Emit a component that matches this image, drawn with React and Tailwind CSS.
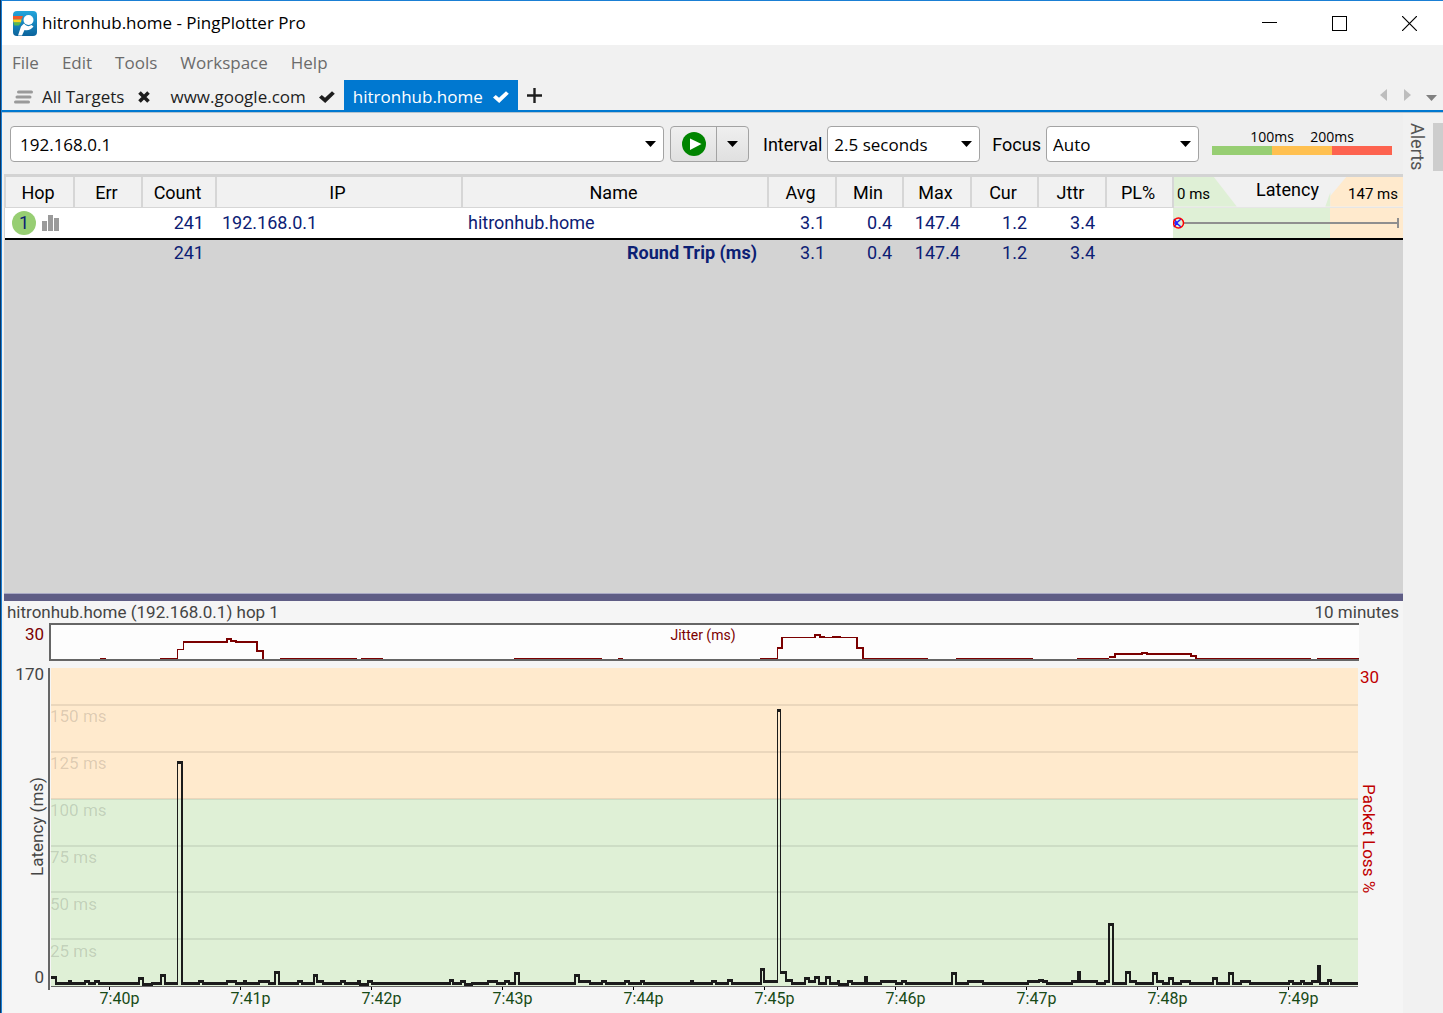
import { useState } from "react";

const MENUS = ["File", "Edit", "Tools", "Workspace", "Help"];

const COLUMNS = [
  { name: "Hop", width: "w-[69px] border-l-2" },
  { name: "Err", width: "w-[68px]" },
  { name: "Count", width: "w-[74px]" },
  { name: "IP", width: "w-[246px]" },
  { name: "Name", width: "" },
  { name: "Avg", width: "w-[68px]" },
  { name: "Min", width: "w-[67px]" },
  { name: "Max", width: "w-[68px]" },
  { name: "Cur", width: "w-[67px]" },
  { name: "Jttr", width: "w-[68px]" },
  { name: "PL%", width: "w-[67px]" },
];

const STATS = ["3.1", "0.4", "147.4", "1.2", "3.4"];

const TIMES = ["7:40p", "7:41p", "7:42p", "7:43p", "7:44p", "7:45p", "7:46p", "7:47p", "7:48p", "7:49p"];

// [start, end, height above the base line]; everything between is flat
const SAMPLES = [
  [0, 6, 6], [17, 21, 2], [33, 39, 2], [43, 49, 2], [87, 93, 5], [93, 100, -1], [109, 115, 8],
  [126, 132, 221], [147, 153, 2], [175, 186, 2], [192, 196, 2], [207, 219, 2], [223, 229, 11],
  [246, 252, 2], [262, 267, 8], [267, 273, 2], [289, 295, 2], [306, 310, 2], [310, 316, -1],
  [316, 322, 2], [398, 403, 3], [409, 415, 2], [415, 420, -1], [436, 447, 2], [453, 459, 2],
  [463, 469, 10], [523, 529, 8], [529, 540, 2], [550, 556, 2], [573, 579, 2], [589, 594, 2],
  [639, 643, 2], [660, 666, 2], [676, 682, 3], [709, 714, 14], [714, 726, 2], [726, 730, 273],
  [730, 736, 11], [736, 742, 3], [753, 759, 5], [759, 763, 2], [763, 769, 6], [774, 780, 6],
  [786, 789, 2], [789, 796, -1], [796, 802, 2], [813, 817, 6], [829, 846, 2], [850, 856, 2],
  [900, 906, 10], [916, 933, 2], [976, 987, 2], [987, 993, 3], [993, 997, 2], [1020, 1026, 2],
  [1026, 1030, 11], [1030, 1047, 2], [1053, 1057, 2], [1057, 1063, 59], [1074, 1080, 11],
  [1080, 1086, 2], [1101, 1107, 10], [1107, 1113, 2], [1117, 1123, 5], [1129, 1140, 2],
  [1161, 1167, 5], [1177, 1183, 10], [1189, 1200, 2], [1237, 1243, 2], [1249, 1254, 2],
  [1260, 1266, 2], [1266, 1270, 17], [1276, 1281, 3],
];

const GRID = [
  { label: "150 ms", y: 36 },
  { label: "125 ms", y: 83 },
  { label: "100 ms", y: 130 },
  { label: "75 ms", y: 177 },
  { label: "50 ms", y: 223 },
  { label: "25 ms", y: 270 },
];

function tracePath() {
  const base = 314;
  const steps = [];
  let x = 0;
  SAMPLES.forEach(([start, end, h]) => {
    if (start > x) steps.push([x, start, base]);
    steps.push([start, end, base - h]);
    x = end;
  });
  steps.push([x, 1307, base]);

  let d = "";
  steps.forEach(([from, to, y], i) => {
    d += `M${from} ${y}H${to}V${y + 3}H${from}Z`;
    const next = steps[i + 1];
    if (next) {
      const top = Math.min(y, next[2]);
      const bottom = Math.max(y, next[2]) + 3;
      const rising = next[2] < y;
      // narrow spikes keep thin sides so that they stay hollow
      const thin = Math.abs(next[2] - y) > 240 || (rising && y - next[2] > 100);
      const w = thin ? 1 : 2;
      const left = rising ? to : to - w;
      d += `M${left} ${top}h${w}V${bottom}h${-w}Z`;
    }
  });
  return d;
}

function Logo() {
  return (
    <svg width="24" height="25" viewBox="0 0 24 25" aria-hidden="true">
      <defs>
        <linearGradient id="logoBg" x1="0" y1="0" x2="0" y2="1">
          <stop offset="0" stopColor="#22a5dc" />
          <stop offset="1" stopColor="#0b639c" />
        </linearGradient>
      </defs>
      <rect x="0" y="0" width="24" height="25" rx="4" fill="url(#logoBg)" />
      <path d="M0 5H10L8.500 8.500H0Z" fill="#f0592a" />
      <path d="M0 8.500H8.500L8 11.500H0.500Z" fill="#fdd31d" />
      <path d="M0.500 11.500H8L6 14.500H1.500Z" fill="#5cb947" />
      <circle cx="15.500" cy="9" r="5" fill="#fff" />
      <path d="M11 12.500L8 15.500L5 24.500H9L11.500 19C15 19.800 18.500 18.500 20.500 15.500L18.500 14C16.500 15.500 14 15.500 12.500 14Z" fill="#fff" />
    </svg>
  );
}

function Check() {
  return (
    <svg width="16" height="12" viewBox="0 0 16 12" aria-hidden="true">
      <path d="M0 6.500L2.800 4L6 6.800L13 0.200L15.800 2.800L6.200 12Z" fill="currentColor" />
    </svg>
  );
}

function Caret() {
  return (
    <svg width="11" height="6" viewBox="0 0 11 6" aria-hidden="true">
      <path d="M0 0H11L5.500 6Z" fill="currentColor" />
    </svg>
  );
}

function TitleBar() {
  return (
    <header className="flex h-11 items-center justify-between bg-white pl-[11px] font-['Open_Sans',sans-serif] text-black">
      <div className="flex items-center gap-[5px]">
        <Logo />
        <h1 className="text-[17px]">hitronhub.home - PingPlotter Pro</h1>
      </div>
      <div className="flex h-full">
        <button aria-label="Minimize" className="flex w-[67px] items-center justify-center">
          <svg width="15" height="15" viewBox="0 0 15 15" shapeRendering="crispEdges"><path d="M0 6.500H15" stroke="#000" /></svg>
        </button>
        <button aria-label="Maximize" className="flex w-[72px] items-center justify-center">
          <svg width="15" height="15" viewBox="0 0 15 15" shapeRendering="crispEdges"><rect x="0.500" y="0.500" width="14" height="14" fill="none" stroke="#000" /></svg>
        </button>
        <button aria-label="Close" className="flex w-[68px] items-center justify-center">
          <svg width="15" height="15" viewBox="0 0 15 15"><path d="M0 0L15 15M15 0L0 15" stroke="#000" strokeWidth="1.200" /></svg>
        </button>
      </div>
    </header>
  );
}

function TabStrip() {
  return (
    <div className="flex h-[30px] items-stretch justify-between font-['Open_Sans',sans-serif] text-[17px] text-[#1e1e1e]">
      <div className="flex items-stretch">
        <button className="flex items-center pt-[3px] pl-3">
          <svg width="19" height="14" viewBox="0 0 19 14" className="mr-[9px]" aria-hidden="true">
            <path d="M4.500 2H17.500M3 7H16M1.500 12H14.500" stroke="#9a9a9a" strokeWidth="3" strokeLinecap="round" />
          </svg>
          All Targets
          <svg width="12" height="12" viewBox="0 0 12 12" className="ml-3.5" aria-hidden="true">
            <path d="M1.500 1.500L10.500 10.500M10.500 1.500L1.500 10.500" stroke="currentColor" strokeWidth="3.600" />
          </svg>
        </button>
        <button className="flex items-center gap-[13px] pt-[3px] pr-[9px] pl-5">www.google.com <Check /></button>
        <button className="flex items-center gap-2.5 bg-[#0078d0] px-[9px] pt-[3px] text-white">hitronhub.home <Check /></button>
        <button aria-label="New tab" className="px-[9px]">
          <svg width="15" height="15" viewBox="0 0 15 15"><path d="M7.500 0V15M0 7.500H15" stroke="#1e1e1e" strokeWidth="2.400" /></svg>
        </button>
      </div>
      <div className="flex items-center gap-[17px] pr-1.5">
        <button aria-label="Previous tab"><svg width="7" height="12" viewBox="0 0 7 12"><path d="M7 0V12L0 6Z" fill="#bdbdbd" /></svg></button>
        <button aria-label="Next tab"><svg width="7" height="12" viewBox="0 0 7 12"><path d="M0 0V12L7 6Z" fill="#bdbdbd" /></svg></button>
        <button aria-label="All tabs" className="-ml-0.5 pt-1.5 text-[#808080]"><Caret /></button>
      </div>
    </div>
  );
}

function Picker({ id, label, value, options, onChange }) {
  return (
    <div className="flex items-center gap-[5px]">
      <label htmlFor={id} className="pt-0.5">{label}</label>
      <div className="relative">
        <select
          id={id}
          value={value}
          onChange={(e) => onChange(e.target.value)}
          className="h-9 w-[153px] appearance-none rounded border border-[#a3a3a3] bg-white pt-0.5 pl-1.5 font-['Open_Sans',sans-serif] text-[17px]"
        >
          {options.map((o) => <option key={o}>{o}</option>)}
        </select>
        <span className="pointer-events-none absolute top-[15px] right-2"><Caret /></span>
      </div>
    </div>
  );
}

function Toolbar() {
  const [target, setTarget] = useState("192.168.0.1");
  const [interval, setIntervalValue] = useState("2.5 seconds");
  const [focus, setFocus] = useState("Auto");

  return (
    <div className="flex h-[61px] items-center bg-[#efefef] pr-[11px] pl-1.5 text-[18px] text-black">
      <div className="flex h-9 flex-1 items-center rounded border border-[#a3a3a3] bg-white pr-[7px] pl-[9px]">
        <input
          aria-label="Target"
          value={target}
          onChange={(e) => setTarget(e.target.value)}
          className="min-w-0 flex-1 pt-0.5 font-['Open_Sans',sans-serif] text-[17px] outline-none"
        />
        <button aria-label="Recent targets"><Caret /></button>
      </div>
      <div className="ml-1.5 flex h-9 w-[79px] rounded border border-[#a3a3a3] bg-linear-to-b from-[#efefef] to-[#e0e0e0]">
        <button aria-label="Start" className="flex w-[46px] items-center justify-center border-r border-[#a3a3a3]">
          <svg width="24" height="24" viewBox="0 0 24 24">
            <circle cx="12" cy="12" r="12" fill="#008400" />
            <path d="M8 6.500L19.500 12L8 18Z" fill="#fff" />
          </svg>
        </button>
        <button aria-label="Start options" className="flex flex-1 items-center justify-center"><Caret /></button>
      </div>
      <div className="ml-3.5 flex gap-3">
        <Picker id="interval" label="Interval" value={interval} onChange={setIntervalValue} options={["1 second", "2.5 seconds", "5 seconds"]} />
        <Picker id="focus" label="Focus" value={focus} onChange={setFocus} options={["Auto", "All", "10 minutes"]} />
      </div>
      <div className="ml-[13px] w-[180px] pb-1 font-['Open_Sans',sans-serif] text-[14px] leading-[18px]">
        <div className="flex justify-center">
          <span className="w-[60px] text-center">100ms</span>
          <span className="w-[60px] text-center">200ms</span>
        </div>
        <div className="grid h-[9px] grid-cols-3">
          <div className="bg-[#97ce73]" />
          <div className="bg-[#ffc050]" />
          <div className="bg-[#fd634f]" />
        </div>
      </div>
    </div>
  );
}

function HopTable() {
  return (
    <table className="w-full table-fixed border-collapse text-[18px] leading-6 text-[#0c2074]">
      <thead>
        <tr className="h-[30px] bg-[#f1f1f1] text-black">
          {COLUMNS.map((c) => (
            <th key={c.name} className={`border-r-2 border-b border-[#d6d6d6] pt-0.5 pr-[3px] pb-0 pl-0 font-normal ${c.width}`}>{c.name}</th>
          ))}
          <th className="relative w-[230px] border-b border-[#e6e6e6] p-0 font-normal">
            <svg className="absolute inset-0 h-full w-full" viewBox="0 0 230 31" preserveAspectRatio="none" aria-hidden="true">
              <path d="M0 0H40L63 31H0Z" fill="#dff0d6" />
              <path d="M157 16V31H152Z" fill="#dff0d6" />
              <path d="M173 0H230V31H157V20Z" fill="#ffeacd" />
            </svg>
            <div className="relative grid grid-cols-[1fr_auto_1fr] pr-[5px] pl-[3px] text-[15px]">
              <span className="pt-1 text-left">0 ms</span>
              <span className="text-[18px]">Latency</span>
              <span className="pt-1 text-right">147 ms</span>
            </div>
          </th>
        </tr>
      </thead>
      <tbody>
        <tr className="h-8 border-b-2 border-black bg-white">
          <td className="p-0 pl-[7px]">
            <div className="flex items-center gap-1.5">
              <span className="flex size-6 items-center justify-center rounded-full bg-[#97ce73]">1</span>
              <svg width="17" height="16" viewBox="0 0 17 16" fill="#9a9a9a" aria-hidden="true">
                <path d="M0 6H5V16H0ZM6 0H11V16H6ZM12 3H17V16H12Z" />
              </svg>
            </div>
          </td>
          <td />
          <td className="p-0 pr-3 text-right">241</td>
          <td className="p-0 pl-1.5">192.168.0.1</td>
          <td className="p-0 pl-1.5">hitronhub.home</td>
          {STATS.map((s) => <td key={s} className="p-0 pr-[11px] text-right">{s}</td>)}
          <td />
          <td className="p-0">
            <svg className="block h-[30px] w-full" viewBox="0 0 230 30" preserveAspectRatio="none" role="img" aria-label="Latency range 0.4 to 147.4 ms">
              <path d="M0 0H157V30H0Z" fill="#dff0d6" />
              <path d="M157 0H230V30H157Z" fill="#ffeacd" />
              <path d="M10 15H225M225 10V20" stroke="#8f8f8f" strokeWidth="2" />
              <path d="M1 15H4M8 11L3.500 15L8 19M1 11L4 15L1 19" fill="none" stroke="#22f" strokeWidth="1.500" />
              <circle cx="5.500" cy="15" r="5" fill="none" stroke="#f00" strokeWidth="1.500" />
            </svg>
          </td>
        </tr>
        <tr className="h-[26px]">
          <td />
          <td />
          <td className="p-0 pr-3 text-right">241</td>
          <td />
          <td className="p-0 pr-[11px] text-right font-bold">Round Trip (ms)</td>
          {STATS.map((s) => <td key={s} className="p-0 pr-[11px] text-right">{s}</td>)}
          <td />
          <td />
        </tr>
      </tbody>
    </table>
  );
}

function JitterGraph() {
  return (
    <div className="flex pr-11">
      <div className="w-[45px] pt-px pr-[5px] text-right text-[17px] leading-5 text-[#7b0000]">30</div>
      <div className="relative flex-1 border-y-2 border-l-2 border-[#666] bg-[#fdfdfd]">
        <svg className="block h-[34px] w-full" viewBox="0 0 1308 34" preserveAspectRatio="none" fill="none" stroke="#7b0000" shapeRendering="crispEdges" aria-hidden="true">
          <path d="M126.500 34V24.500H132.500V17" />
          <path d="M132 17H176V14H180V16H185V17H206V26H212V34" strokeWidth="2" />
          <path d="M726.500 34V23" />
          <path d="M726 23H731V12" strokeWidth="2" />
          <path d="M731 12.500H764" />
          <path d="M764 13V10H769V12H774M781 12H790" strokeWidth="2" />
          <path d="M774 12.500H781M790 12.500H806" />
          <path d="M806 12V23H812V34" strokeWidth="2" />
          <path d="M1058 32H1064V29H1091V28H1096V29H1140V31H1145V34" strokeWidth="2" />
          <path d="M49 33.500H55M109 33.500H127M229 33.500H306M310 33.500H332M463 33.500H551M567 33.500H572M709 33.500H727M812 33.500H877M905 33.500H982M1026 33.500H1058M1145 33.500H1260M1266 33.500H1308" />
        </svg>
        <span className="absolute inset-x-0 top-0 pr-1 text-center text-[14px] leading-5 text-[#7b0000]">Jitter (ms)</span>
      </div>
    </div>
  );
}

function LatencyGraph() {
  return (
    <div className="mt-[7px] flex">
      <div className="flex w-11 flex-col items-end justify-between pr-1 pb-1.5 text-[17px] leading-[13px] text-[#444]">
        <span>170</span>
        <span className="rotate-180 leading-[13px] [writing-mode:vertical-rl]">Latency (ms)</span>
        <span>0</span>
      </div>
      <div className="relative flex-1 border-l-2 border-[#666] pl-px">
        <svg className="block h-[322px] w-full" viewBox="0 0 1307 322" preserveAspectRatio="none" shapeRendering="crispEdges" role="img" aria-label="Latency over the last 10 minutes">
          <path d="M0 0H1307V131H0Z" fill="#ffeacd" />
          <path d="M0 131H1307V318H0Z" fill="#dff0d6" />
          {GRID.map((g) => <path key={g.y} d={`M0 ${g.y}H1307v2H0Z`} fill="#000" fillOpacity="0.08" />)}
          <path d={tracePath()} fill="#1b1b1b" />
          <path d="M0 318H1307v1H0Z" fill="#666" />
          {TIMES.map((t, i) => <path key={t} d={`M${58 + i * 131} 319h1v3h-1Z`} fill="#000" />)}
        </svg>
        <div className="absolute inset-x-0 top-10 flex flex-col text-[17px] text-black/15">
          {GRID.map((g) => <span key={g.label} className="h-[47px] leading-4">{g.label}</span>)}
        </div>
      </div>
      <div className="flex w-[45px] flex-col items-start pl-0.5 text-[17px] leading-[18px] text-[#c00000]">
        <span>30</span>
        <span className="mt-[98px] leading-[18px] [writing-mode:vertical-rl]">Packet Loss %</span>
      </div>
    </div>
  );
}

export default function App() {
  return (
    <div className="flex min-h-screen border-l border-[#0b3560] bg-[#f1f1f1] font-['Roboto',sans-serif]">
      <div className="flex min-w-0 flex-1 flex-col border-t border-l border-[#1a7fd4]">
        <TitleBar />
        <nav className="flex h-[35px] items-center gap-[23px] pl-2.5 font-['Open_Sans',sans-serif] text-[17px] text-[#6b6b6b]">
          {MENUS.map((m) => <button key={m}>{m}</button>)}
        </nav>
        <TabStrip />
        <div className="h-[3px] border-t-2 border-[#0078d0] bg-[#b5c3ce]" />
        <div className="flex flex-1">
          <main className="flex min-w-0 flex-1 flex-col pl-0.5">
            <Toolbar />
            <div className="flex flex-1 flex-col bg-[#d3d3d3] pt-[3px]">
              <HopTable />
            </div>
            <div className="h-2 border-t border-[#a9a9c4] bg-[#5f5d85]" />
            <section className="bg-[#f5f5f5] pb-1.5">
              <div className="flex h-[22px] items-center justify-between pt-0.5 pr-1 pl-[3px] text-[17px] text-[#444]">
                <h2>hitronhub.home (192.168.0.1) hop 1</h2>
                <span>10 minutes</span>
              </div>
              <JitterGraph />
              <LatencyGraph />
              <div className="mr-[39px] ml-[50px] grid grid-cols-10 text-center text-[16px] leading-[17px] text-[#174a17]">
                {TIMES.map((t) => <span key={t}>{t}</span>)}
              </div>
            </section>
          </main>
          <aside className="flex w-10 items-start justify-between pt-2.5 pl-0.5">
            <button className="text-[18px] leading-6 text-[#555] [writing-mode:vertical-rl]">Alerts</button>
            <div className="h-12 w-2.5 bg-[#cdcdcd]" />
          </aside>
        </div>
      </div>
    </div>
  );
}
